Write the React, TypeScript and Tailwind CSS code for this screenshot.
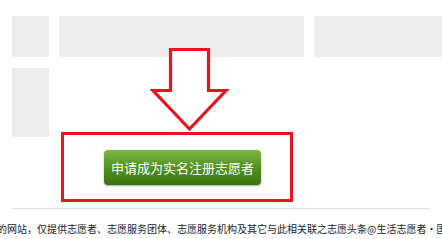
const grayBlock = 'bg-[#ededed]';

function DownArrow() {
  return (
    <svg
      className="absolute left-[150px] top-[47px]"
      width="80"
      height="86"
      viewBox="0 0 80 86"
      fill="none"
    >
      <path
        d="M20.5 2.5 H58.5 V43.5 H76 L39.5 82 L3 43.5 H20.5 Z"
        fill="#ffffff"
        stroke="#e8141e"
        strokeWidth="3.2"
        strokeLinejoin="miter"
      />
    </svg>
  );
}

export default function App() {
  return (
    <div className="relative h-[239px] w-[442px] overflow-hidden bg-white font-['Noto_Sans_CJK_SC',sans-serif]">
      <div className="ml-3 mt-4 flex h-[41px] gap-[10px]">
        <div className={`w-[37px] ${grayBlock}`} />
        <div className={`w-[245px] ${grayBlock}`} />
        <div className={`w-[128px] ${grayBlock}`} />
      </div>

      <div className="mt-[11px] flex items-start">
        <div className={`ml-3 h-[69px] w-[37px] ${grayBlock}`} />
        <div className="ml-3 mt-[64px] flex h-[70px] w-[232px] items-center border-[3px] border-[#e8141e] pl-[40px]">
          <button
            type="button"
            className="flex h-[35px] w-[157px] items-center justify-center rounded-[4px] bg-gradient-to-b from-[#7cb844] via-[#52921f] to-[#3a7310] text-[13px] leading-none text-white shadow-[0_1px_2px_rgba(0,0,0,0.35)]"
          >
            申请成为实名注册志愿者
          </button>
        </div>
      </div>

      <div className="mx-3 mt-[6px] h-px bg-[#e2e2e2]" />

      <p className="ml-[-3px] mt-[14px] whitespace-nowrap text-[10px] leading-[12px] text-[#222222]">
        的网站，仅提供志愿者、志愿服务团体、志愿服务机构及其它与此相关联之志愿头条@生活志愿者‧国
      </p>

      <DownArrow />
    </div>
  );
}
